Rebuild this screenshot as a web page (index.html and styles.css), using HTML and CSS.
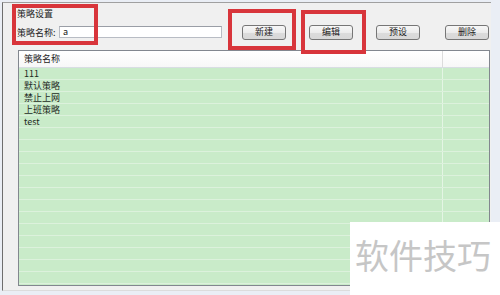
FILE: index.html
```html
<!DOCTYPE html>
<html lang="zh-CN">
<head>
  <meta charset="UTF-8" />
  <meta name="viewport" content="width=device-width, initial-scale=1.0"/>
  <title>策略设置</title>
  <link rel="stylesheet" href="styles.css">
</head>
<body>
  <div class="frame">
    <div class="title">策略设置</div>
    <div class="toolbar">
      <span class="label">策略名称:</span>
      <div class="input">a</div>
      <button class="btn btn-new">新建</button>
      <button class="btn btn-edit">编辑</button>
      <button class="btn btn-preset">预设</button>
      <button class="btn btn-delete">删除</button>
    </div>

    <div class="list">
      <div class="row head">
        <div class="cell">策略名称</div>
        <div class="cell"></div>
      </div>
      <div id="rows"></div>
    </div>
  </div>

  <div class="mark mark-1"></div>
  <div class="mark mark-2"></div>
  <div class="mark mark-3"></div>

  <div class="watermark">软件技巧</div>

  <script>
    const names = ["111", "默认策略", "禁止上网", "上班策略", "test"];
    const rowsEl = document.getElementById("rows");

    for (let i = 0; i < 18; i++) {
      const row = document.createElement("div");
      row.className = "row";
      row.innerHTML = `
        <div class="cell">${names[i] || ""}</div>
        <div class="cell"></div>
      `;
      rowsEl.appendChild(row);
    }
  </script>
</body>
</html>
```

FILE: styles.css
```css
body {
  margin: 0;
  width: 500px;
  height: 295px;
  overflow: hidden;
  background: #eaeef5;
  font-family: "Noto Sans CJK SC", "Liberation Sans", sans-serif;
  font-size: 9px;
  color: #222;
}
.frame {
  margin: 2px 0 0 2px;
  width: 489px;
  height: 289px;
  box-sizing: border-box;
  border-left: 1px solid #6e6e6e;
  border-top: 1px solid #a0a0a0;
  border-bottom: 1px solid #dcdcdc;
  background: #f0f0f0;
  padding: 5px 0 0 14px;
}
.title {
  height: 12px;
  line-height: 12px;
}
.toolbar {
  display: flex;
  align-items: center;
  height: 16px;
  margin-top: 4px;
}
.label {
  width: 42px;
}
.input {
  width: 163px;
  height: 12px;
  box-sizing: border-box;
  background: #fff;
  border: 1px solid #b8bcc4;
  border-top-color: #9a9ea6;
  line-height: 10px;
  padding-left: 3px;
}
.btn {
  width: 44px;
  height: 15px;
  padding: 0;
  border: 1px solid #767676;
  border-radius: 3px;
  background: linear-gradient(#f7f7f7, #ececec 50%, #dcdcdc 51%, #d8d8d8);
  font-family: inherit;
  font-size: 9px;
  line-height: 12px;
  color: #222;
}
.btn-new { margin-left: 20px; }
.btn-edit { margin-left: 23px; }
.btn-preset { margin-left: 23px; }
.btn-delete { margin-left: 25px; }

.list {
  margin: 10px 0 0 1px;
  width: 472px;
  height: 236px;
  box-sizing: border-box;
  border: 1px solid #82878f;
  background: #c9ebc9;
  overflow: hidden;
}
.row {
  display: grid;
  grid-template-columns: 424px 1fr;
  height: 12px;
  box-sizing: border-box;
  border-bottom: 1px solid #dcf1dc;
}
.row .cell {
  line-height: 11px;
  padding-left: 5px;
  border-right: 1px solid #e4f5e4;
  color: #1e2a1e;
}
.row .cell:last-child {
  border-right: none;
}
.row.head {
  height: 17px;
  background: linear-gradient(#ffffff, #f7f7f7);
  border-bottom: 1px solid #d8dde3;
}
.row.head .cell {
  line-height: 16px;
  border-right-color: #dcdcdc;
  color: #222;
}

.mark {
  position: absolute;
  box-sizing: border-box;
  border: 4px solid #d8353b;
}
.mark-1 { left: 12px; top: 4px; width: 86px; height: 41px; }
.mark-2 { left: 228px; top: 9px; width: 68px; height: 41px; }
.mark-3 { left: 301px; top: 10px; width: 65px; height: 44px; }

.watermark {
  position: absolute;
  left: 350px;
  top: 222px;
  width: 150px;
  height: 73px;
  background: #fff;
  color: #c6c6c6;
  font-size: 34px;
  line-height: 66px;
  padding-left: 5px;
  box-sizing: border-box;
  letter-spacing: 0;
}
```
